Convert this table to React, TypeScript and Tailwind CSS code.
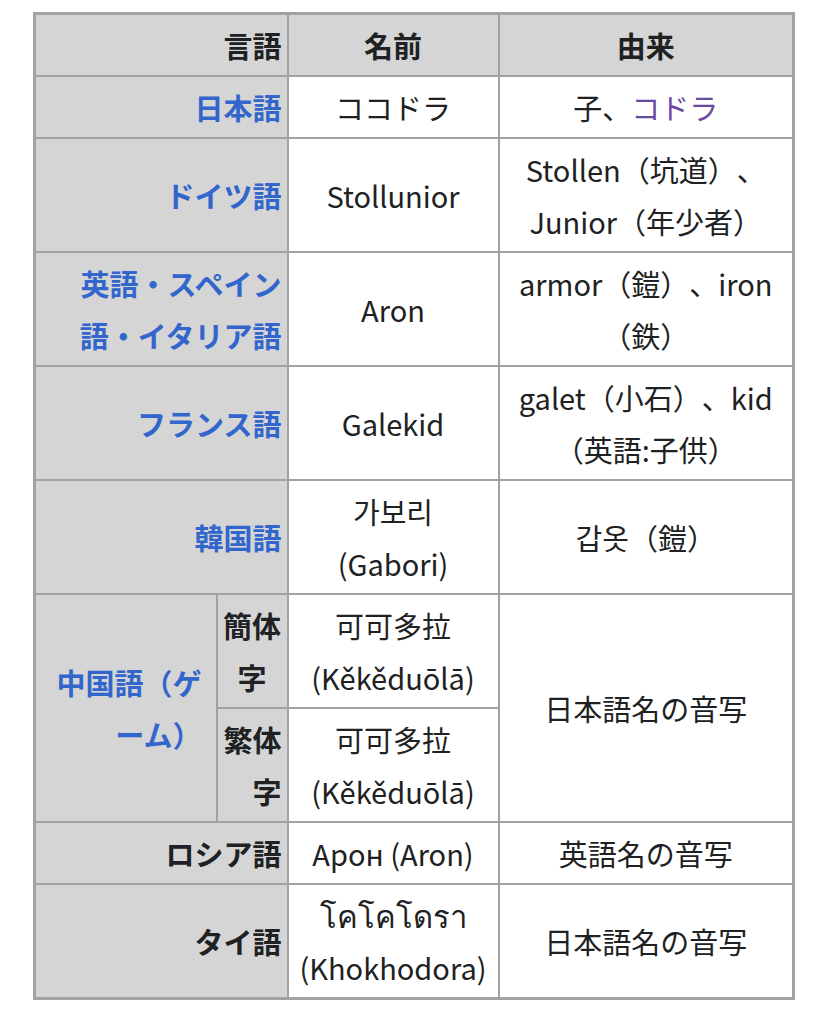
import React from 'react';

const FONT = { fontFamily: '"Noto Sans CJK JP", "Noto Sans", "Noto Sans CJK KR", sans-serif' };

const th = 'border-2 border-[#a2a2a2] bg-[#d5d5d5] px-[5px] py-1 font-bold text-[#202122]';
const td = 'border-2 border-[#a2a2a2] bg-white px-[5px] py-1 text-center text-[#202122]';
const link = 'text-[#3366cc]';

function Lang({ children, color = link }: { children: React.ReactNode; color?: string }) {
  return (
    <th colSpan={2} className={`${th} text-right`}>
      <span className={color}>{children}</span>
    </th>
  );
}

export default function App() {
  return (
    <div className="min-h-screen bg-white pl-[33px] pt-[12px]" style={FONT}>
      <table className="table-fixed border-collapse border-[3px] border-[#a2a2a2] text-[29px] leading-[52px] whitespace-nowrap [text-spacing-trim:space-all]">
        <colgroup>
          <col className="w-[182px]" />
          <col className="w-[71px]" />
          <col className="w-[211px]" />
          <col className="w-[295px]" />
        </colgroup>
        <thead>
          <tr>
            <th colSpan={2} className={`${th} text-right`}>言語</th>
            <th className={`${th} text-center`}>名前</th>
            <th className={`${th} text-center`}>由来</th>
          </tr>
        </thead>
        <tbody>
          <tr>
            <Lang>日本語</Lang>
            <td className={td}>ココドラ</td>
            <td className={td}>
              子、<span className="text-[#6b4ba1]">コドラ</span>
            </td>
          </tr>
          <tr>
            <Lang>ドイツ語</Lang>
            <td className={td}>Stollunior</td>
            <td className={td}>
              Stollen（坑道）、
              <br />
              Junior（年少者）
            </td>
          </tr>
          <tr>
            <Lang>
              英語・スペイン
              <br />
              語・イタリア語
            </Lang>
            <td className={td}>Aron</td>
            <td className={td}>
              armor（鎧）、iron
              <br />
              （鉄）
            </td>
          </tr>
          <tr>
            <Lang>フランス語</Lang>
            <td className={td}>Galekid</td>
            <td className={td}>
              galet（小石）、kid
              <br />
              （英語:子供）
            </td>
          </tr>
          <tr>
            <Lang>韓国語</Lang>
            <td className={td}>
              가보리
              <br />
              (Gabori)
            </td>
            <td className={td}>갑옷（鎧）</td>
          </tr>
          <tr>
            <th rowSpan={2} className={`${th} pr-[14px] text-right`}>
              <span className={link}>
                中国語（ゲ
                <br />
                ーム）
              </span>
            </th>
            <th className={`${th} text-center`}>
              簡体
              <br />
              字
            </th>
            <td className={td}>
              可可多拉
              <br />
              (Kěkěduōlā)
            </td>
            <td rowSpan={2} className={td}>日本語名の音写</td>
          </tr>
          <tr>
            <th className={`${th} text-right`}>
              繁体
              <br />
              字
            </th>
            <td className={td}>
              可可多拉
              <br />
              (Kěkěduōlā)
            </td>
          </tr>
          <tr>
            <Lang color="text-[#202122]">ロシア語</Lang>
            <td className={td}>Арон (Aron)</td>
            <td className={td}>英語名の音写</td>
          </tr>
          <tr>
            <Lang color="text-[#202122]">タイ語</Lang>
            <td className={td}>
              <span className="text-[31px]">โคโคโดรา</span>
              <br />
              (Khokhodora)
            </td>
            <td className={td}>日本語名の音写</td>
          </tr>
        </tbody>
      </table>
    </div>
  );
}
